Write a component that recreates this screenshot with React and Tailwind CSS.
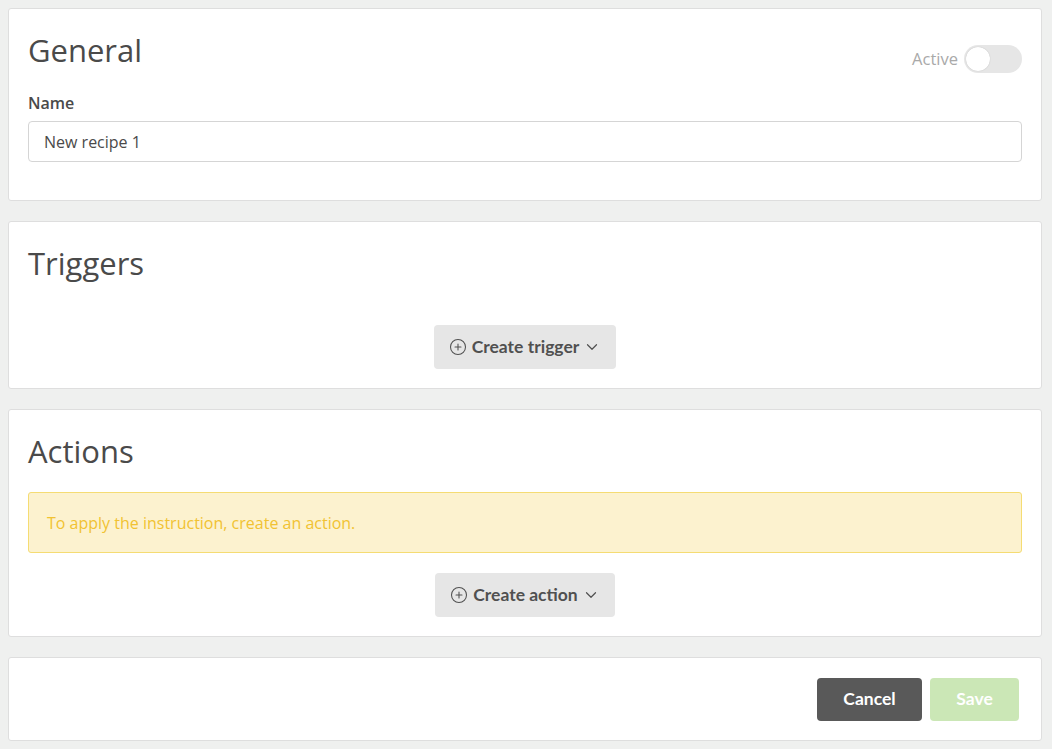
import { CirclePlus, ChevronDown } from 'lucide-react';

const HEADING = "text-[31px] leading-[45px] text-[#4a4a4a] font-['Open_Sans',sans-serif]";
const GRAY_BTN = "inline-flex items-center h-[44px] rounded-[4px] bg-[#e6e6e6] text-[#505050] font-['Lato',sans-serif] font-bold text-[17.5px]";

function Card({ className = '', children }) {
  return (
    <div className={`bg-white border border-[#dedede] rounded-[3px] ${className}`}>
      {children}
    </div>
  );
}

function DropButton({ label }) {
  return (
    <button className={`${GRAY_BTN} pl-[15px] pr-[15px]`}>
      <CirclePlus size={18} strokeWidth={1.4} className="mr-[5px]" />
      <span>{label}</span>
      <ChevronDown size={18} strokeWidth={1.6} className="ml-[4px]" />
    </button>
  );
}

export default function App() {
  return (
    <div className="min-h-screen bg-[#eff0ef] pl-2 pr-[10px] py-2 flex flex-col gap-5 font-['Open_Sans',sans-serif]">
      {/* General */}
      <Card className="px-[19px] pt-[19px] pb-[38px]">
        <div className="flex justify-between items-start">
          <h1 className={HEADING}>General</h1>
          <div className="flex items-center gap-[6px] mt-[17px]">
            <span className="text-[16.5px] text-[#a9a9a9]">Active</span>
            <div className="w-[58px] h-[28px] rounded-full bg-[#e6e6e6] p-[2px] flex items-center">
              <div className="w-[24px] h-[24px] rounded-full bg-white shadow-[0_0_1px_rgba(0,0,0,0.25)]" />
            </div>
          </div>
        </div>
        <label className="block mt-[20px] text-[16px] leading-[20px] font-semibold text-[#4a4a4a]">Name</label>
        <input
          defaultValue="New recipe 1"
          className="mt-[8px] w-full h-[41px] rounded-[4px] border border-[#d5d5d5] px-[15px] text-[16px] text-[#4a4a4a] outline-none"
        />
      </Card>

      {/* Triggers */}
      <Card className="px-[19px] pt-[19px] pb-[19px]">
        <h2 className={HEADING}>Triggers</h2>
        <div className="flex justify-center mt-[39px]">
          <DropButton label="Create trigger" />
        </div>
      </Card>

      {/* Actions */}
      <Card className="px-[19px] pt-[19px] pb-[19px]">
        <h2 className={HEADING}>Actions</h2>
        <div className="mt-[18px] h-[61px] flex items-center px-[18px] rounded-[3px] border border-[#f5dc73] bg-[#fcf2cf] text-[16px] text-[#f1c232]">
          To apply the instruction, create an action.
        </div>
        <div className="flex justify-center mt-[20px]">
          <DropButton label="Create action" />
        </div>
      </Card>

      {/* Footer */}
      <Card className="pt-[20px] pb-[19px] pr-[22px] flex justify-end gap-2">
        <button className="h-[43px] w-[105px] rounded-[4px] bg-[#595959] text-white font-['Lato',sans-serif] font-bold text-[17.5px]">
          Cancel
        </button>
        <button className="h-[43px] w-[89px] rounded-[4px] bg-[#cbe7b6] text-white font-['Lato',sans-serif] font-bold text-[17.5px]">
          Save
        </button>
      </Card>
    </div>
  );
}
